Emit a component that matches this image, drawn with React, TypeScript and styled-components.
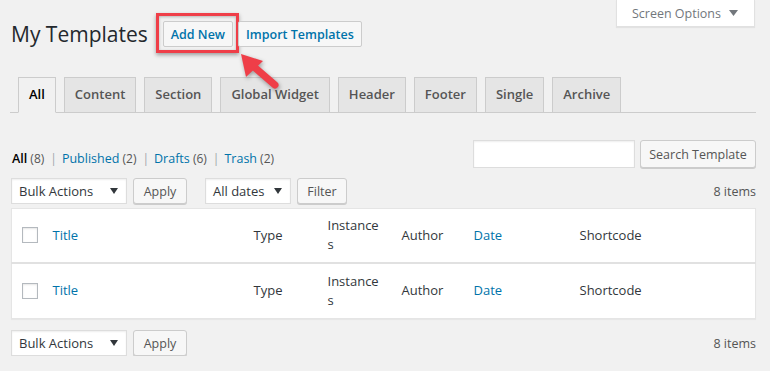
import React from "react";
import styled, { createGlobalStyle } from "styled-components";

const GlobalStyle = createGlobalStyle`
  body {
    margin: 0;
    background: #f1f1f1;
    font-family: "Open Sans", "Noto Sans", sans-serif;
    font-size: 13px;
    color: #444;
  }
`;

const Page = styled.div`
  padding: 0 14px 0 11px;
`;

const TopBar = styled.div`
  display: flex;
  justify-content: space-between;
  align-items: flex-start;
`;

const Heading = styled.div`
  display: flex;
  align-items: center;
  padding-top: 21px;
`;

const Title = styled.h1`
  margin: 0;
  font-size: 21px;
  font-weight: 400;
  line-height: 26px;
  color: #23282d;
`;

const ActionWrap = styled.div`
  position: relative;
  margin-left: ${(p: { $gap: number }) => p.$gap}px;
`;

const ActionButton = styled.a`
  display: inline-flex;
  align-items: center;
  height: 26px;
  box-sizing: border-box;
  padding: 0 7px;
  border: 1px solid #ccc;
  border-radius: 2px;
  background: #f7f7f7;
  color: #0073aa;
  font-size: 12.5px;
  font-weight: 600;
  text-decoration: none;
`;

const Highlight = styled.div`
  position: absolute;
  left: -7px;
  top: -8px;
  width: 83px;
  height: 40px;
  box-sizing: border-box;
  border: 3px solid #ef3e48;
  box-shadow: 0 2px 4px rgba(0, 0, 0, 0.35), inset 0 1px 3px rgba(0, 0, 0, 0.25);
  pointer-events: none;
`;

const Arrow = styled.svg`
  position: absolute;
  left: 70px;
  top: 25px;
  overflow: visible;
  filter: drop-shadow(1px 2px 2px rgba(0, 0, 0, 0.35));
`;

const ScreenOptions = styled.div`
  display: flex;
  align-items: center;
  gap: 8px;
  height: 27px;
  box-sizing: border-box;
  margin-right: 1px;
  padding: 0 16px 0 15px;
  background: #fff;
  border: 1px solid #e1e1e1;
  border-top: none;
  box-shadow: 0 1px 1px rgba(0, 0, 0, 0.06);
  color: #72777c;
  font-size: 12.5px;
`;

const TabBar = styled.div`
  display: flex;
  gap: 8px;
  margin: 30px 0 0 -1px;
  padding-left: 8px;
  border-bottom: 1px solid #ccc;
`;

const Tab = styled.div<{ $active?: boolean }>`
  height: 34px;
  line-height: 33px;
  padding: 0 10px;
  margin-bottom: -1px;
  border: 1px solid #ccc;
  border-bottom: 1px solid ${(p) => (p.$active ? "#f1f1f1" : "#ccc")};
  background: ${(p) => (p.$active ? "#f1f1f1" : "#e5e5e5")};
  color: ${(p) => (p.$active ? "#000" : "#555")};
  font-size: 13px;
  font-weight: 600;
`;

const ListHeader = styled.div`
  display: flex;
  justify-content: space-between;
  align-items: flex-end;
  margin-top: 27px;
`;

const Views = styled.ul`
  display: flex;
  margin: 0 0 0 1px;
  padding: 0;
  list-style: none;
  font-size: 12px;
  line-height: 18px;
  color: #555;
`;

const ViewItem = styled.li`
  white-space: pre;
  & + &::before {
    content: "|";
    color: #a0a5aa;
    margin: 0 5px 0 6px;
  }
`;

const ViewLink = styled.span<{ $current?: boolean }>`
  color: ${(p) => (p.$current ? "#000" : "#0073aa")};
  font-weight: ${(p) => (p.$current ? 600 : 400)};
  font-size: 12.5px;
`;

const Search = styled.div`
  display: flex;
  gap: 5px;
`;

const SearchInput = styled.div`
  width: 162px;
  height: 28px;
  box-sizing: border-box;
  background: #fff;
  border: 1px solid #ddd;
  box-shadow: inset 0 1px 2px rgba(0, 0, 0, 0.07);
`;

const Button = styled.div<{ $w?: number; $h?: number }>`
  display: flex;
  align-items: center;
  justify-content: center;
  width: ${(p) => (p.$w ? `${p.$w}px` : "auto")};
  height: ${(p) => p.$h ?? 26}px;
  box-sizing: border-box;
  border: 1px solid #ccc;
  border-radius: 3px;
  background: #f7f7f7;
  box-shadow: 0 1px 0 #ccc;
  color: #555;
  font-size: 12.5px;
`;

const TableNav = styled.div<{ $top: number }>`
  display: flex;
  align-items: center;
  margin-top: ${(p) => p.$top}px;
  height: 26px;
`;

const Select = styled.div<{ $w: number; $gap?: number }>`
  display: flex;
  align-items: center;
  justify-content: space-between;
  width: ${(p) => p.$w}px;
  height: 26px;
  box-sizing: border-box;
  margin-left: ${(p) => p.$gap ?? 0}px;
  padding: 0 8px 0 7px;
  background: #fff;
  border: 1px solid #ddd;
  box-shadow: inset 0 1px 2px rgba(0, 0, 0, 0.07);
  color: #32373c;
  font-size: 13px;
`;

const NavButton = styled(Button)<{ $gap: number }>`
  margin-left: ${(p) => p.$gap}px;
`;

const ItemCount = styled.div`
  margin-left: auto;
  color: #555;
  font-size: 12.5px;
`;

const Table = styled.table`
  width: 100%;
  margin-top: 4px;
  border-collapse: collapse;
  table-layout: fixed;
  background: #fff;
  border: 1px solid #e5e5e5;
  box-shadow: 0 1px 1px rgba(0, 0, 0, 0.04);
`;

const HeadRow = styled.tr<{ $last?: boolean }>`
  height: ${(p) => (p.$last ? 56 : 54)}px;
  border-top: ${(p) => (p.$last ? "2px solid #e1e1e1" : "none")};
`;

const Cell = styled.th<{ $link?: boolean }>`
  padding: 0 10px;
  text-align: left;
  vertical-align: middle;
  font-weight: 400;
  font-size: 13px;
  line-height: 19px;
  color: ${(p) => (p.$link ? "#0073aa" : "#32373c")};
`;

const Check = styled.div`
  width: 16px;
  height: 16px;
  box-sizing: border-box;
  border: 1px solid #b4b9be;
  background: #fff;
  box-shadow: inset 0 1px 2px rgba(0, 0, 0, 0.1);
`;

const Caret = () => (
  <svg width="8" height="6" viewBox="0 0 8 6">
    <path d="M0 0h8L4 6z" fill="#32373c" />
  </svg>
);

const tabs = ["All", "Content", "Section", "Global Widget", "Header", "Footer", "Single", "Archive"];

const views = [
  { label: "All", count: 8, current: true },
  { label: "Published", count: 2 },
  { label: "Drafts", count: 6 },
  { label: "Trash", count: 2 },
];

const columns: { w?: number; label?: string; link?: boolean }[] = [
  { w: 31 },
  { w: 201, label: "Title", link: true },
  { w: 74, label: "Type" },
  { w: 74, label: "Instances" },
  { w: 72, label: "Author" },
  { w: 106, label: "Date", link: true },
  { label: "Shortcode" },
];

const HeaderCells = () => (
  <>
    {columns.map((c, i) =>
      i === 0 ? (
        <Cell key={i}>
          <Check />
        </Cell>
      ) : (
        <Cell key={i} $link={c.link}>
          {c.label === "Instances" ? (
            <>
              Instance
              <wbr />s
            </>
          ) : (
            c.label
          )}
        </Cell>
      )
    )}
  </>
);

const BulkBar = ({ top, filters }: { top: number; filters?: boolean }) => (
  <TableNav $top={top}>
    <Select $w={116}>
      Bulk Actions
      <Caret />
    </Select>
    <NavButton $gap={6} $w={54}>
      Apply
    </NavButton>
    {filters && (
      <>
        <Select $w={86} $gap={18}>
          All dates
          <Caret />
        </Select>
        <NavButton $gap={6} $w={50}>
          Filter
        </NavButton>
      </>
    )}
    <ItemCount>8 items</ItemCount>
  </TableNav>
);

export default function App() {
  return (
    <Page>
      <GlobalStyle />
      <TopBar>
        <Heading>
          <Title>My Templates</Title>
          <ActionWrap $gap={15}>
            <ActionButton>Add New</ActionButton>
            <Highlight />
            <Arrow width="50" height="50" viewBox="0 0 50 50">
              <line x1="20" y1="20" x2="42" y2="39" stroke="#ef3e48" strokeWidth="7" strokeLinecap="round" />
              <path d="M8 8 L13 31 L30 15 Z" fill="#ef3e48" />
            </Arrow>
          </ActionWrap>
          <ActionWrap $gap={5}>
            <ActionButton>Import Templates</ActionButton>
          </ActionWrap>
        </Heading>
        <ScreenOptions>
          Screen Options
          <svg width="9" height="6" viewBox="0 0 9 6">
            <path d="M0 0h9L4.5 6z" fill="#72777c" />
          </svg>
        </ScreenOptions>
      </TopBar>

      <TabBar>
        {tabs.map((t) => (
          <Tab key={t} $active={t === "All"}>
            {t}
          </Tab>
        ))}
      </TabBar>

      <ListHeader>
        <Views>
          {views.map((v) => (
            <ViewItem key={v.label}>
              <ViewLink $current={v.current}>{v.label}</ViewLink> ({v.count})
            </ViewItem>
          ))}
        </Views>
        <Search>
          <SearchInput />
          <Button $w={116} $h={28}>
            Search Template
          </Button>
        </Search>
      </ListHeader>

      <BulkBar top={10} filters />

      <Table>
        <colgroup>
          {columns.map((c, i) => (
            <col key={i} style={c.w ? { width: c.w } : undefined} />
          ))}
        </colgroup>
        <thead>
          <HeadRow>
            <HeaderCells />
          </HeadRow>
        </thead>
        <tfoot>
          <HeadRow $last>
            <HeaderCells />
          </HeadRow>
        </tfoot>
      </Table>

      <BulkBar top={11} />
    </Page>
  );
}
